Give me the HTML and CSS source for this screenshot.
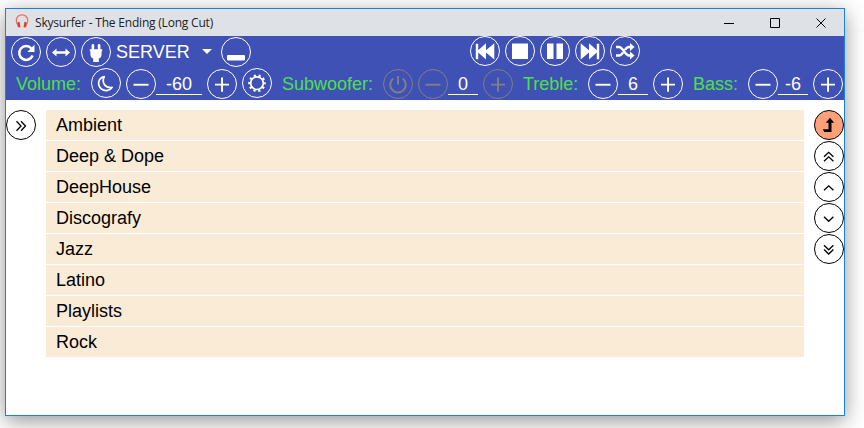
FILE: index.html
```
<!DOCTYPE html>
<html lang="en">
<head>
<meta charset="utf-8">
<title>Skysurfer - The Ending (Long Cut)</title>
<link rel="stylesheet" href="styles.css">
</head>
<body>
<div class="window">
  <header class="titlebar">
    <svg class="app-icon" viewBox="0 0 14 14"><path d="M2.200 10C-.2 4.500 2.800.8 7 .8s7.200 3.700 4.800 9.200" fill="none" stroke="#ec7468" stroke-width="1.300"/><path d="M2.600 8.200l2-.4.800 5.500-1.700.2Q1.500 11.500 2.600 8.200zM11.400 8.200l-2-.4-.8 5.500 1.700.2Q12.500 11.500 11.400 8.200z" fill="#e83a2c"/></svg>
    <span class="title">Skysurfer - The Ending (Long Cut)</span>
    <div class="controls">
      <svg viewBox="0 0 46 27"><path d="M18 14.500h10"/></svg>
      <svg viewBox="0 0 46 27"><path d="M18.500 9.500h9v9h-9z"/></svg>
      <svg viewBox="0 0 46 27"><path d="M18.500 9.500l9 9m0-9l-9 9"/></svg>
    </div>
  </header>
  <div class="toolbar">
    <div class="row">
      <button class="btn"><svg viewBox="0 0 30 30"><path d="M20.400 11.500A6.900 6.900 0 1 0 21.600 18.500" fill="none" stroke="currentColor" stroke-width="2.500"/><path d="M23.500 7.800v7.200h-7.200z"/></svg></button>
      <button class="btn"><svg viewBox="0 0 30 30"><path d="M6 15.500l4.500-4v2.700h9v-2.700l4.500 4-4.500 4v-2.700h-9v2.700z"/></svg></button>
      <button class="btn"><svg viewBox="0 0 30 30"><path d="M10.600 8.200q0-1.200 1.300-1.200t1.300 1.200v4.500h-2.600zM16.800 8.200q0-1.200 1.300-1.200t1.300 1.200v4.500h-2.600zM8.800 12.200h12.400v2h-.6v3q0 3.600-2.800 4.300V25h-5.600v-3.500q-2.800-.7-2.800-4.300v-3h-.6z"/></svg></button>
      <div class="select"><span>SERVER</span><i class="caret"></i></div>
      <button class="btn"><svg viewBox="0 0 30 30"><rect x="6" y="18" width="18" height="5.500" rx="1"/></svg></button>
      <div class="transport">
        <button class="btn"><svg viewBox="0 0 30 30"><path d="M5.800 7.700h2.400v6.600L16 7.300v7L24.300 7.300v16.200L16 16.500v7l-7.800-7v6.700H5.800z"/></svg></button>
        <button class="btn"><svg viewBox="0 0 30 30"><path d="M7 7.500h16V23H7z"/></svg></button>
        <button class="btn"><svg viewBox="0 0 30 30"><path d="M7 7.500h6.500V23H7zM16.500 7.500H23V23h-6.500z"/></svg></button>
        <button class="btn"><svg viewBox="0 0 30 30"><path d="M24.200 7.700h-2.400v6.600L14 7.300v7L5.700 7.300v16.200l8.300-7v7l7.800-7v6.700h2.400z"/></svg></button>
        <button class="btn"><svg viewBox="0 0 30 30"><path d="M6 11h3c4 0 6 8.500 10 8.500h2M6 19.500h3c1.800 0 3-1.600 4-3.200M15 14c1-1.700 2.200-3 4-3h2" fill="none" stroke="currentColor" stroke-width="2.400"/><path d="M20 7l4.500 4-4.500 4zM20 15.500l4.500 4-4.500 4z"/></svg></button>
      </div>
    </div>
    <div class="row levels">
      <div class="group volume">
        <label>Volume:</label>
        <button class="btn raised"><svg viewBox="0 0 30 30"><path d="M13.300 8.700C6.500 10.200 6.200 17.500 10.500 21c3.800 2.800 8.800 1.400 10.700-1.600-6.400 1-11.200-4.200-7.900-10.700z" fill="none" stroke="currentColor" stroke-width="1.700" stroke-linejoin="round"/></svg></button>
        <button class="btn"><svg viewBox="0 0 30 30"><path d="M7.500 14.800h15v1.900h-15z"/></svg></button>
        <span class="value wide">-60</span>
        <button class="btn"><svg viewBox="0 0 30 30"><path d="M8 14.700h6.100V8.500H16v6.200h6v1.900h-6v6.200h-1.900v-6.200H8z"/></svg></button>
        <button class="btn raised"><svg viewBox="0 0 30 30"><circle cx="15" cy="15.200" r="6.300" fill="none" stroke="currentColor" stroke-width="1.700"/><circle cx="15" cy="15.200" r="7.700" fill="none" stroke="currentColor" stroke-width="2.200" stroke-dasharray="2.200 2.638" stroke-dashoffset="1.100"/></svg></button>
      </div>
      <div class="group sub">
        <label>Subwoofer:</label>
        <button class="btn off"><svg viewBox="0 0 30 30"><path d="M10.200 9.500a7.800 7.800 0 1 0 9.600 0M15 7v8.500" fill="none" stroke="currentColor" stroke-width="2"/></svg></button>
        <button class="btn off"><svg viewBox="0 0 30 30"><path d="M7.500 14.800h15v1.900h-15z"/></svg></button>
        <span class="value">0</span>
        <button class="btn off"><svg viewBox="0 0 30 30"><path d="M8 14.700h6.100V8.500H16v6.200h6v1.900h-6v6.200h-1.900v-6.200H8z"/></svg></button>
      </div>
      <div class="group treble">
        <label>Treble:</label>
        <button class="btn"><svg viewBox="0 0 30 30"><path d="M7.500 14.800h15v1.900h-15z"/></svg></button>
        <span class="value">6</span>
        <button class="btn"><svg viewBox="0 0 30 30"><path d="M8 14.700h6.100V8.500H16v6.200h6v1.900h-6v6.200h-1.900v-6.200H8z"/></svg></button>
      </div>
      <div class="group bass">
        <label>Bass:</label>
        <button class="btn"><svg viewBox="0 0 30 30"><path d="M7.500 14.800h15v1.900h-15z"/></svg></button>
        <span class="value">-6</span>
        <button class="btn"><svg viewBox="0 0 30 30"><path d="M8 14.700h6.100V8.500H16v6.200h6v1.900h-6v6.200h-1.900v-6.200H8z"/></svg></button>
      </div>
    </div>
  </div>
  <main class="content">
    <button class="btn dark"><svg viewBox="0 0 30 30"><path class="line" d="M10.500 11.300l4.500 4.700-4.500 4.700M15 11.300l4.500 4.700-4.500 4.700"/></svg></button>
    <ul class="list">
      <li>Ambient</li>
      <li>Deep &amp; Dope</li>
      <li>DeepHouse</li>
      <li>Discografy</li>
      <li>Jazz</li>
      <li>Latino</li>
      <li>Playlists</li>
      <li>Rock</li>
    </ul>
    <nav class="side">
      <button class="btn dark up"><svg viewBox="0 0 30 30"><path d="M16 7.800l4.200 4.900h-2.700V22h-7.200l-1.500-2.800h5.700v-6.500h-2.700z"/></svg></button>
      <button class="btn dark"><svg viewBox="0 0 30 30"><path class="line" d="M10 15.800l4.700-4.500 4.700 4.500M10 20.300l4.700-4.500 4.700 4.500"/></svg></button>
      <button class="btn dark"><svg viewBox="0 0 30 30"><path class="line" d="M10 18.300l4.700-4.500 4.700 4.500"/></svg></button>
      <button class="btn dark"><svg viewBox="0 0 30 30"><path class="line" d="M10 13.800l4.700 4.500 4.700-4.500"/></svg></button>
      <button class="btn dark"><svg viewBox="0 0 30 30"><path class="line" d="M10 11.300l4.700 4.500 4.700-4.500M10 15.500l4.700 4.500 4.700-4.500"/></svg></button>
    </nav>
  </main>
</div>
</body>
</html>
```
FILE: styles.css
```
* { box-sizing: border-box; }
body {
  margin: 0;
  height: 428px;
  padding: 8px 19px 12px 5px;
  overflow: hidden;
  background: #fff;
  font: 18px/30px "Liberation Sans", Arial, sans-serif;
}
.window {
  width: 840px;
  height: 408px;
  border: 1px solid #1883d7;
  background: #fff;
  box-shadow: 0 5px 20px rgba(0, 0, 0, .42);
}
.titlebar {
  display: flex;
  align-items: center;
  height: 27px;
  padding-left: 9px;
  background: #dee1e6;
}
.app-icon { width: 14px; height: 14px; margin-top: -3px; }
.title {
  margin-left: 6px;
  color: #222;
  font: 12px/27px "Open Sans", sans-serif;
  letter-spacing: -.2px;
  white-space: nowrap;
}
.controls { display: flex; margin-left: auto; }
.controls svg {
  width: 46px;
  height: 27px;
  fill: none;
  stroke: #000;
  stroke-width: 1;
}
.toolbar { height: 64px; background: #3f51b5; color: #fff; }
.row { display: flex; gap: 5px; height: 32px; padding: 1px 0 0 5px; }
.btn {
  flex: none;
  width: 30px;
  height: 30px;
  padding: 0;
  border: 1px solid currentColor;
  border-radius: 50%;
  background: none;
  color: #fff;
}
.btn svg { display: block; width: 30px; height: 30px; margin: -1px; fill: currentColor; }
.off { color: #808080; }
.select { display: flex; align-items: center; width: 100px; height: 30px; }
.caret {
  margin: 0 0 1px 12px;
  border: 5px solid transparent;
  border-top-color: #fff;
  border-bottom: 0;
}
.transport { display: flex; gap: 5px; height: 30px; margin: -1px 0 0 214px; }
.levels { gap: 0; padding-left: 10px; }
.group { display: flex; flex: none; }
.group label { color: #4be04b; }
.group .btn { margin-right: 5px; }
.group .btn:has(+ .value) { margin-right: 0; }
.raised { margin-top: -1px; }
.volume label { width: 75px; }
.sub { margin-left: 5px; }
.sub label { width: 101px; }
.treble { margin-left: 5px; }
.treble label { width: 65px; }
.bass { margin-left: 5px; }
.bass label { width: 55px; }
.value {
  width: 30px;
  height: 26px;
  margin-right: 5px;
  border-bottom: 1px solid #fff;
  text-align: center;
}
.wide { width: 46px; }
.content { display: flex; gap: 10px; padding-top: 10px; }
.dark { color: #000; }
.dark .line { fill: none; stroke: currentColor; stroke-width: 1.300; }
.list {
  display: grid;
  gap: 1px;
  width: 758px;
  margin: 0;
  padding: 0;
  list-style: none;
}
.list li { height: 30px; padding-left: 10px; background: #faebd7; color: #000; }
.side { display: grid; gap: 1px; align-content: start; }
.up { background: #ffa07a; }
```
